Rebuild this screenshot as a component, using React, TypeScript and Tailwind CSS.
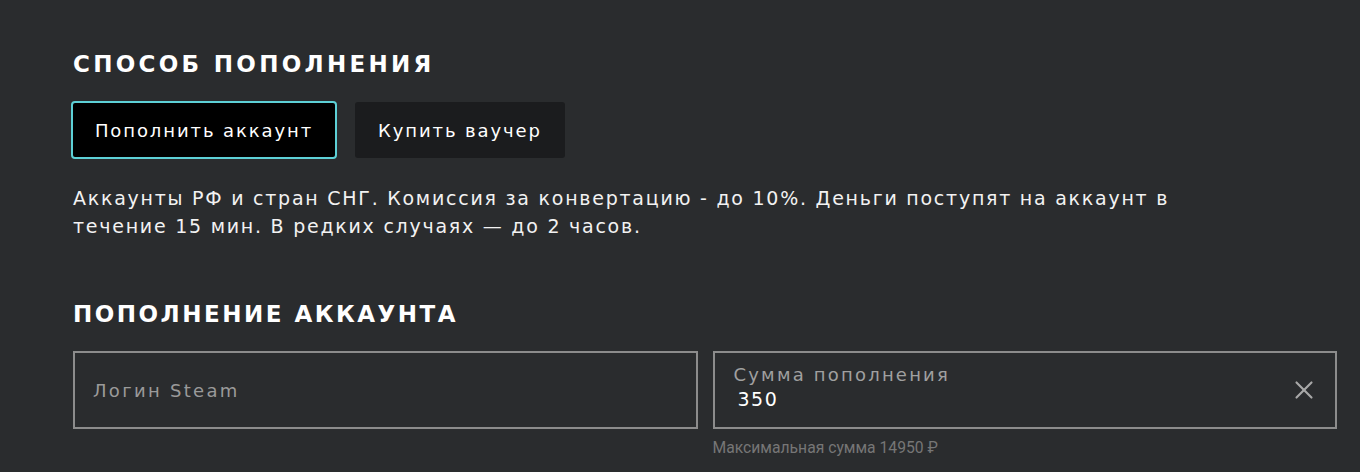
import { X } from "lucide-react";

const wide = { fontFamily: '"DejaVu Sans", "Noto Sans", sans-serif' };

export default function App() {
  return (
    <div className="min-h-[472px] w-full bg-[#2a2c2e] text-white" style={wide}>
      <div className="w-[1264px] ml-[73px] pt-[50px]">
        <h2 className="text-[23px] font-bold uppercase tracking-[3.3px] leading-[28px]">
          Способ пополнения
        </h2>

        <div className="flex gap-[18px] mt-[23px]">
          <button className="h-[58px] w-[266px] -ml-[2px] rounded-[4px] border-2 border-[#5dd0d6] bg-black text-[18px] tracking-[1.9px] text-white">
            Пополнить аккаунт
          </button>
          <button className="h-[56px] w-[210px] mt-[1px] rounded-[3px] bg-[#1b1c1e] text-[18px] tracking-[1.9px] text-white">
            Купить ваучер
          </button>
        </div>

        <p className="mt-[25px] w-[1125px] text-[19px] tracking-[1.75px] leading-[28px] text-[#f2f2f2]">
          Аккаунты РФ и стран СНГ. Комиссия за конвертацию - до 10%. Деньги поступят на аккаунт в
          течение 15 мин. В редких случаях — до 2 часов.
        </p>

        <h2 className="mt-[60px] text-[23px] font-bold uppercase tracking-[2.5px] leading-[28px]">
          Пополнение аккаунта
        </h2>

        <div className="grid grid-cols-2 gap-[15px] mt-[23px]">
          <div className="h-[78px] border-2 border-[#8c8c8c] flex items-center px-[18px]">
            <span className="text-[18px] tracking-[2.3px] text-[#9a9a9a]">Логин Steam</span>
          </div>
          <div>
            <div className="h-[78px] border-2 border-[#8c8c8c] flex items-center pl-[19px] pr-[16px]">
              <div className="flex-1 flex flex-col pb-[6px]">
                <span className="text-[18px] leading-[24px] tracking-[2.2px] text-[#a0a0a0]">
                  Сумма пополнения
                </span>
                <span className="text-[19px] leading-[24px] tracking-[1.5px] text-white pl-[4px]">
                  350
                </span>
              </div>
              <X className="w-[30px] h-[30px] text-[#a8a8a8]" strokeWidth={1.7} />
            </div>
            <div
              className="mt-[7px] text-[15.7px] text-[#767676]"
              style={{ fontFamily: 'Roboto, "Liberation Sans", sans-serif' }}
            >
              Максимальная сумма 14950 ₽
            </div>
          </div>
        </div>
      </div>
    </div>
  );
}
